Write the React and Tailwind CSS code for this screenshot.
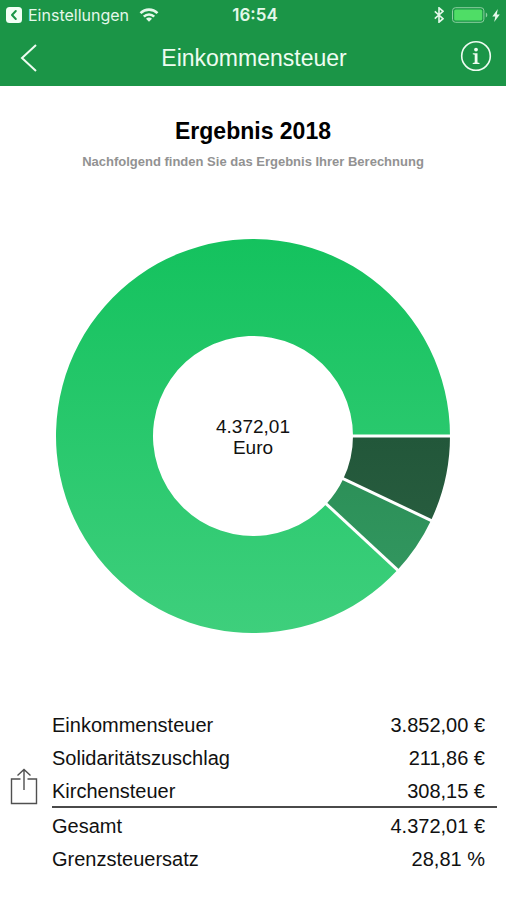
import React from 'react';

const taxes = [
  { label: 'Einkommensteuer', value: 3852.0 },
  { label: 'Solidaritätszuschlag', value: 211.86 },
  { label: 'Kirchensteuer', value: 308.15 },
];

const total = taxes.reduce((sum, t) => sum + t.value, 0);
const rate = 28.81;

const OUTER = 197;
const INNER = 100;

// 4372.01 -> "4.372,01"
function format(n) {
  const [whole, dec] = n.toFixed(2).split('.');
  return `${whole.replace(/\B(?=(\d{3})+$)/g, '.')},${dec}`;
}

function point(radius, angle) {
  return `${(radius * Math.cos(angle)).toFixed(2)} ${(radius * Math.sin(angle)).toFixed(2)}`;
}

function slicePath(from, to) {
  const large = to - from > Math.PI ? 1 : 0;
  return `M${point(OUTER, from)} A${OUTER} ${OUTER} 0 ${large} 1 ${point(OUTER, to)} L${point(INNER, to)} A${INNER} ${INNER} 0 ${large} 0 ${point(INNER, from)} Z`;
}

function StatusBar() {
  return (
    <div className="grid grid-cols-3 items-center h-[30px] pl-[6px] pr-[6px] text-[#e4f8ea] font-['Inter',sans-serif]">
      <div className="flex items-center">
        <svg viewBox="0 0 16 16" className="w-4 h-4 shrink-0" aria-hidden="true">
          <rect width="16" height="16" rx="3.5" fill="#f2fff5" />
          <path d="M9.8 4 6 8l3.8 4" fill="none" stroke="#1b9547" strokeWidth="2" strokeLinecap="round" strokeLinejoin="round" />
        </svg>
        <a href="#einstellungen" className="ml-[6px] text-[16px] leading-5">Einstellungen</a>
        <svg viewBox="0 0 20 14" className="w-5 h-[14px] ml-[10px] shrink-0" aria-hidden="true">
          <g fill="none" stroke="currentColor" strokeWidth="2.6">
            <path d="M1.5 5.1a12.2 12.2 0 0 1 17 0" />
            <path d="M4.8 8.6a7.4 7.4 0 0 1 10.4 0" />
          </g>
          <path d="M10 13.8 7 10.8a4.2 4.2 0 0 1 6 0z" fill="currentColor" />
        </svg>
      </div>
      <div className="pl-1 text-center text-[17px] leading-5 font-semibold">16:54</div>
      <div className="flex items-center justify-end">
        <svg viewBox="0 0 10 16" className="w-[10px] h-4" aria-hidden="true">
          <path d="M.8 4.3 9 11.7 5 15.2V.8l4 3.5L.8 11.7" fill="none" stroke="currentColor" strokeWidth="1.6" />
        </svg>
        <svg viewBox="0 0 36 16" className="w-9 h-4 ml-2" aria-hidden="true">
          <rect x=".5" y=".7" width="31.4" height="14.6" rx="3" fill="none" stroke="#8ccfa0" strokeWidth="1" />
          <rect x="2.2" y="2.4" width="28" height="11.2" rx="1.5" fill="#4fdd66" />
          <path d="M33.8 5.5c2 .8 2 4.2 0 5z" fill="#8ccfa0" />
        </svg>
        <svg viewBox="0 0 8 13" className="w-2 h-[13px] ml-1" aria-hidden="true">
          <path d="M5.8 0 .3 7.4h3L2.2 13 7.8 5.4h-3z" fill="currentColor" />
        </svg>
      </div>
    </div>
  );
}

function NavBar() {
  return (
    <div className="flex items-center justify-between h-14 pl-5 pr-[14px] text-[#eefcf1]">
      <button type="button" aria-label="Zurück" className="w-7 h-8 flex items-center">
        <svg viewBox="0 0 18 28" className="w-[18px] h-7" fill="none" stroke="currentColor" strokeWidth="2">
          <path d="M16 1 2 14l14 13" />
        </svg>
      </button>
      <h1 className="text-[23px] leading-7">Einkommensteuer</h1>
      <button type="button" aria-label="Info" className="w-8 h-8 mb-1">
        <svg viewBox="0 0 32 32" className="w-8 h-8">
          <circle cx="16" cy="16" r="14.3" fill="none" stroke="currentColor" strokeWidth="1.6" />
          <circle cx="16" cy="9.6" r="1.9" fill="currentColor" />
          <path d="M12.8 13.2h4.7v9.2l2 .5v1H12.7v-1l2-.5v-7.7l-1.9-.5z" fill="currentColor" />
        </svg>
      </button>
    </div>
  );
}

function Donut() {
  const church = (taxes[2].value / total) * 2 * Math.PI;
  const soli = church + (taxes[1].value / total) * 2 * Math.PI;
  const slices = [
    { from: 0, to: church, fill: 'url(#church)' },
    { from: church, to: soli, fill: 'url(#soli)' },
    { from: soli, to: 2 * Math.PI, fill: 'url(#income)' },
  ];

  return (
    <svg viewBox="-197 -197 394 394" className="block w-[394px] max-w-full mx-auto" role="img" aria-label="Zusammensetzung">
      <defs>
        <linearGradient id="income" gradientUnits="userSpaceOnUse" x1="0" y1="-197" x2="0" y2="197">
          <stop offset="0" stopColor="#14c25e" />
          <stop offset="1" stopColor="#3ecf7c" />
        </linearGradient>
        <linearGradient id="soli" gradientUnits="userSpaceOnUse" x1="0" y1="40" x2="0" y2="140">
          <stop offset="0" stopColor="#2c9058" />
          <stop offset="1" stopColor="#32965f" />
        </linearGradient>
        <linearGradient id="church" gradientUnits="userSpaceOnUse" x1="0" y1="0" x2="0" y2="85">
          <stop offset="0" stopColor="#22573a" />
          <stop offset="1" stopColor="#275c3e" />
        </linearGradient>
      </defs>
      {slices.map(s => <path key={s.fill} d={slicePath(s.from, s.to)} fill={s.fill} />)}
      {slices.map(s => (
        <path key={s.fill} d={`M${point(INNER - 1, s.from)} L${point(OUTER + 1, s.from)}`} stroke="#fff" strokeWidth="3" />
      ))}
      <text textAnchor="middle" fontSize="19" fill="#111">
        <tspan x="0" y="-3">{format(total)}</tspan>
        <tspan x="0" y="18">Euro</tspan>
      </text>
    </svg>
  );
}

function Row({ label, value }) {
  return (
    <tr>
      <th scope="row" className="pt-[6px] pb-[3px] text-left font-normal">{label}</th>
      <td className="pt-[6px] pb-[3px] pr-3 text-right">{value}</td>
    </tr>
  );
}

export default function App() {
  return (
    <div className="bg-white pr-px text-[#111] font-['Liberation_Sans',Arial,sans-serif]">
      <header className="bg-[#1b9547]">
        <StatusBar />
        <NavBar />
      </header>

      <main>
        <div className="pt-[31px] text-center">
          <h2 className="text-[23px] leading-7 font-bold text-black">Ergebnis 2018</h2>
          <p className="mt-[7px] text-[13px] leading-5 font-bold text-[#929292]">Nachfolgend finden Sie das Ergebnis Ihrer Berechnung</p>
        </div>

        <div className="mt-[67px]">
          <Donut />
        </div>

        <div className="mt-[74px] flex items-center pl-[10px] pr-[9px]">
          <button type="button" aria-label="Teilen" className="w-7 mr-[14px] pb-2 shrink-0">
            <svg viewBox="0 0 28 37" className="w-7 h-[37px]" fill="none" stroke="#505050" strokeWidth="1.4">
              <path d="M10.500 11H1.500v24.500h25V11h-9" />
              <path d="M14 22V1.500M7.500 7.500 14 1.500l6.500 6" />
            </svg>
          </button>
          <table className="w-full text-[20px] leading-6">
            <tbody>
              {taxes.map(t => <Row key={t.label} label={t.label} value={`${format(t.value)} €`} />)}
            </tbody>
            <tbody className="border-t-2 border-[#4a4a4a]">
              <Row label="Gesamt" value={`${format(total)} €`} />
              <Row label="Grenzsteuersatz" value={`${format(rate)} %`} />
            </tbody>
          </table>
        </div>
      </main>
    </div>
  );
}
